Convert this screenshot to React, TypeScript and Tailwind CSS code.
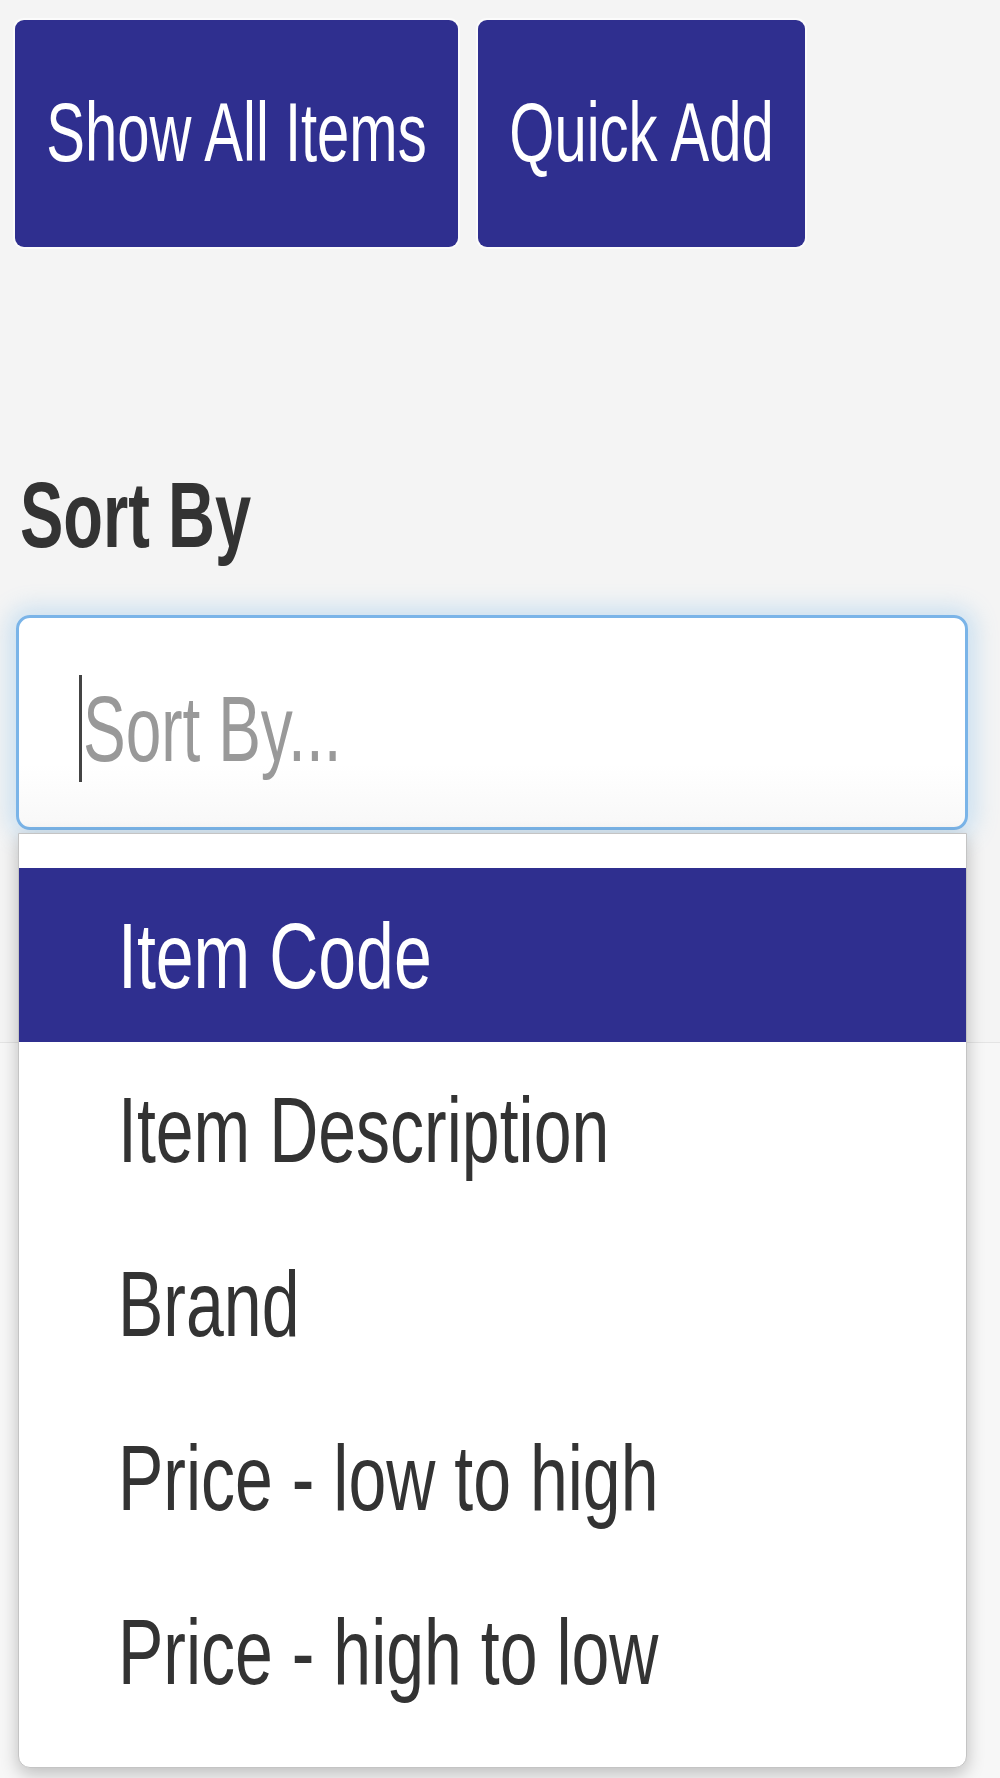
import React from "react";

const options = [
  "Item Code",
  "Item Description",
  "Brand",
  "Price - low to high",
  "Price - high to low",
];

export default function App() {
  const active = 0;

  return (
    <div className="relative w-[1000px] h-[1778px] overflow-hidden bg-[#f4f4f4] font-['Liberation_Sans',Arial,sans-serif] flex flex-col">
      {/* Action buttons */}
      <div className="flex gap-[20px] pl-[15px] pt-[20px]">
        <button className="w-[443px] h-[227px] rounded-[9px] bg-[#2f2f8f] text-white flex items-center justify-center shadow-[0_0_0_2px_#fbfbfb]">
          <span className="inline-block text-[58px] leading-none scale-y-[1.45] translate-y-[-2px]">Show All Items</span>
        </button>
        <button className="w-[327px] h-[227px] rounded-[9px] bg-[#2f2f8f] text-white flex items-center justify-center shadow-[0_0_0_2px_#fbfbfb]">
          <span className="inline-block text-[58px] leading-none scale-y-[1.45] translate-y-[-2px]">Quick Add</span>
        </button>
      </div>

      {/* Sort By */}
      <div className="mt-[218px] h-[100px] pl-[20px] flex items-center">
        <span className="inline-block text-[65px] leading-none font-bold text-[#333] scale-y-[1.42]">Sort By</span>
      </div>

      <div className="relative mt-[50px] ml-[16px] w-[952px]">
        <div className="h-[215px] rounded-[14px] border-[3px] border-[#7ab4e8] bg-gradient-to-b from-white from-70% to-[#f8f8f8] shadow-[0_0_22px_8px_rgba(102,175,233,0.28)] flex items-center pl-[60px] pt-[12px]">
          <span className="w-[3px] h-[107px] bg-[#444]" />
          <span className="inline-block ml-[1px] text-[64px] leading-none text-[#999] scale-y-[1.46]">Sort By...</span>
        </div>

        {/* Dropdown menu */}
        <div className="absolute left-[2px] top-[218px] w-[949px] h-[935px] z-10 bg-white border border-[#c4c4c4] rounded-b-[12px] shadow-[0_6px_18px_rgba(0,0,0,0.24)] pt-[34px] pb-[30px]">
          {options.map((o, i) => (
            <div
              key={o}
              className={
                i === active
                  ? "h-[174px] flex items-center pl-[99px] bg-[#2f2f8f] text-white"
                  : "h-[174px] flex items-center pl-[99px] text-[#333]"
              }
            >
              <span className="inline-block text-[68px] leading-none scale-y-[1.36]">{o}</span>
            </div>
          ))}
        </div>
      </div>

      {/* content area behind the menu */}
      <div className="mt-[212px] flex-1 bg-[#f7f7f7] border-t border-[#e4e4e4]" />
    </div>
  );
}
